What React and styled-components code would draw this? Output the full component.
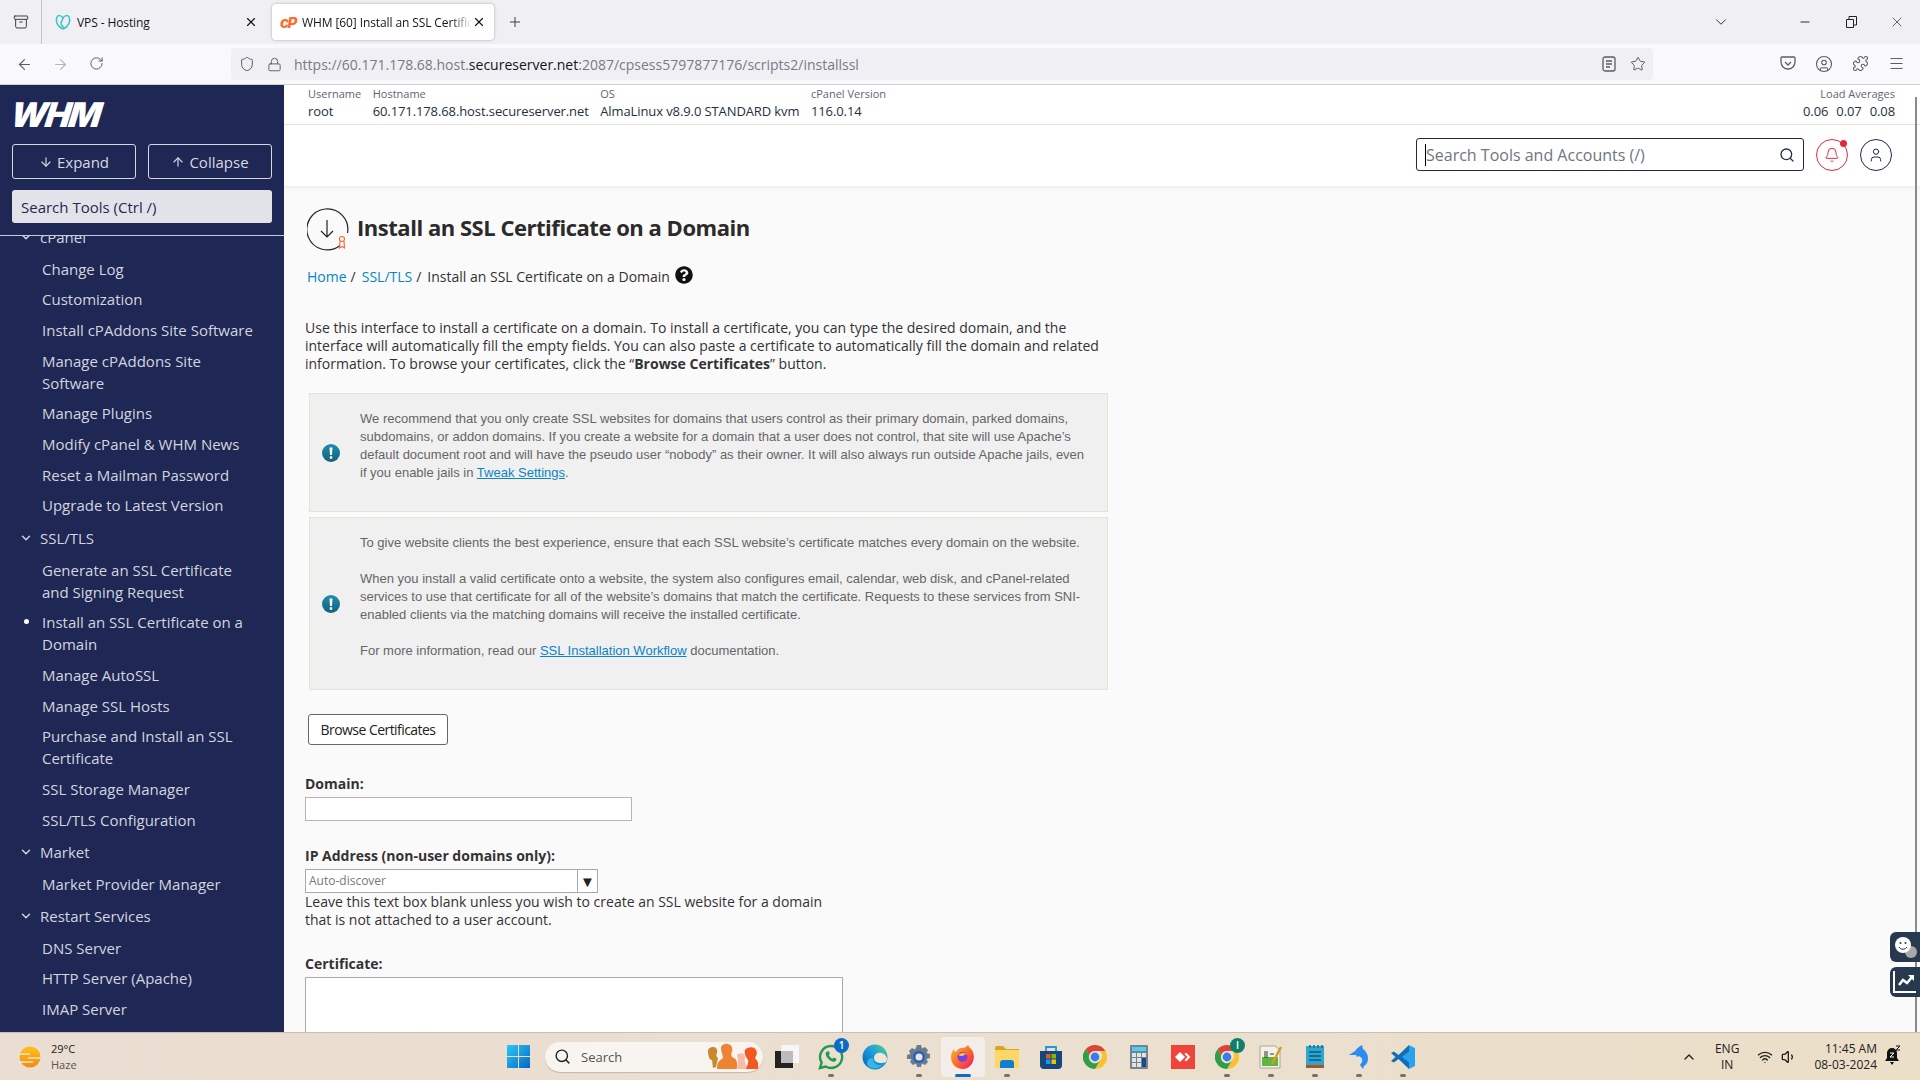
import React from "react";
import styled, { createGlobalStyle } from "styled-components";
import {
  Archive, X, Plus, ArrowLeft, ArrowRight, RotateCw, Shield, Lock, ChevronDown, Minus, Star,
  Menu, Puzzle, CircleUser, Search, Bell, User, ChevronUp, Wifi, Volume1, ArrowDown, ArrowUp,
} from "lucide-react";
import { FaQuestionCircle } from "react-icons/fa";

const GlobalStyle = createGlobalStyle`
  html, body { margin: 0; padding: 0; height: 100%; overflow: hidden; }
  body { font-family: "Open Sans", "Liberation Sans", sans-serif; color: #333; }
  * { box-sizing: border-box; }
`;

const Page = styled.div`
  width: 1920px;
  height: 1080px;
  display: flex;
  flex-direction: column;
  overflow: hidden;
`;

/* browser chrome */
const TabStrip = styled.div`
  height: 44px;
  background: #f0f0f4;
  display: flex;
  align-items: center;
  color: #3c3c44;
  flex: none;
`;
const StripButton = styled.div`
  width: 42px;
  height: 44px;
  display: flex;
  align-items: center;
  justify-content: center;
  border-right: 1px solid #c4c4c8;
  margin-right: 2px;
`;
const Tab = styled.div`
  width: ${(p) => p.$width}px;
  height: 36px;
  margin-right: ${(p) => p.$gap || 0}px;
  border-radius: 4px;
  display: flex;
  align-items: center;
  padding: 0 8px 0 ${(p) => p.$left}px;
  font-size: 12px;
  letter-spacing: -0.1px;
  background: ${(p) => (p.$active ? "#fff" : "transparent")};
  box-shadow: ${(p) => (p.$active ? "0 0 3px rgba(0,0,0,0.3)" : "none")};
  color: #15141a;
`;
const TabTitle = styled.span`
  flex: 1;
  margin-left: 6px;
  white-space: nowrap;
  overflow: hidden;
  mask-image: ${(p) => (p.$fade ? "linear-gradient(90deg, #000 88%, transparent)" : "none")};
`;
const CpMark = styled.span`
  color: #ff6c2c;
  font: italic 800 15px "Inter", sans-serif;
  letter-spacing: -1.5px;
  width: 16px;
`;
const StripSpacer = styled.div`
  flex: 1;
`;
const WindowButton = styled.div`
  width: 46px;
  display: flex;
  justify-content: center;
  align-items: center;
  color: #222;
  margin-right: ${(p) => p.$gap || 0}px;
`;
const ToolBar = styled.div`
  height: 41px;
  background: #f9f9fb;
  border-bottom: 1px solid #cfcfd8;
  display: flex;
  align-items: center;
  flex: none;
  color: #5b5b66;
`;
const NavButton = styled.div`
  width: 36px;
  display: flex;
  justify-content: center;
  color: ${(p) => (p.$off ? "#b4b4ba" : "#5b5b66")};
`;
const NavGroup = styled.div`
  display: flex;
  padding-left: 6px;
  width: 231px;
`;
const UrlBar = styled.div`
  width: 1422px;
  height: 32px;
  background: #f0f0f4;
  border-radius: 4px;
  display: flex;
  align-items: center;
  padding: 0 7px 0 8px;
  gap: 12px;
  color: #5b5b66;
`;
const UrlText = styled.div`
  flex: 1;
  font-size: 14px;
  color: #7a7a84;
  margin-left: 0;
  white-space: nowrap;
  letter-spacing: 0;
  strong {
    font-weight: 400;
    color: #15141a;
  }
`;
const ToolRight = styled.div`
  flex: 1;
  display: flex;
  justify-content: flex-end;
  padding-right: 15px;
  gap: 19px;
`;

/* body */
const Body = styled.div`
  flex: 1;
  min-height: 0;
  display: flex;
`;
const Sidebar = styled.aside`
  width: 284px;
  background: #1f2755;
  color: #d2d5df;
  display: flex;
  flex-direction: column;
  flex: none;
`;
const LogoRow = styled.div`
  height: 59px;
  padding: 9px 0 0 11px;
`;
const LogoText = styled.div`
  color: #fff;
  font: italic 900 34px/42px "Inter", "Liberation Sans", sans-serif;
  letter-spacing: -2px;
  transform: skewX(-8deg);
  transform-origin: left center;
  width: 90px;
`;
const SideButtons = styled.div`
  display: grid;
  grid-template-columns: 124px 124px;
  gap: 12px;
  padding: 0 12px;
`;
const SideButton = styled.div`
  height: 35px;
  border: 1px solid #d7d9e2;
  border-radius: 3px;
  display: flex;
  align-items: center;
  justify-content: center;
  gap: 4px;
  font-size: 15px;
  color: #d7d9e2;
`;
const SideSearch = styled.div`
  height: 33px;
  margin: 11px 12px 0;
  padding: 0 9px;
  background: #e1e3e8;
  border-radius: 3px;
  color: #1f2755;
  font-size: 15px;
  display: flex;
  align-items: center;
`;
const SideNav = styled.nav`
  flex: 1;
  min-height: 0;
  margin-top: 12px;
  border-top: 1px solid #c5c8d6;
  overflow: hidden;
`;
const NavList = styled.div`
  margin-top: -16px;
`;
const NavHeader = styled.div`
  height: 33.5px;
  display: flex;
  align-items: center;
  padding-left: 19px;
  gap: 7px;
  font-size: 15px;
`;
const NavItem = styled.div`
  position: relative;
  padding: 4.33px 28px 4.33px 42px;
  font-size: 15px;
  line-height: 22px;
  ${(p) =>
    p.$active &&
    `&::before {
      content: "";
      position: absolute;
      left: 24px;
      top: 12px;
      width: 5px;
      height: 5px;
      border-radius: 50%;
      background: #fff;
    }`}
`;

/* main */
const Main = styled.main`
  flex: 1;
  min-width: 0;
  display: flex;
  flex-direction: column;
  position: relative;
  background: #fafafa;
`;
const InfoBar = styled.div`
  height: 40px;
  background: #fff;
  border-bottom: 1px solid #e4e4e4;
  display: flex;
  padding: 1px 25px 0 24px;
  flex: none;
`;
const InfoCell = styled.div`
  margin-right: 11.5px;
  ${(p) => p.$right && "margin: 0 0 0 auto; text-align: right;"}
`;
const InfoLabel = styled.div`
  font-size: 11px;
  line-height: 16px;
  color: #5f6670;
`;
const InfoValue = styled.div`
  font-size: 13px;
  line-height: 19px;
  color: #243044;
  white-space: nowrap;
  display: flex;
  gap: 8px;
  letter-spacing: -0.1px;
`;
const TopBar = styled.div`
  height: 61px;
  background: #fff;
  box-shadow: 0 2px 4px rgba(0, 0, 0, 0.06);
  display: flex;
  align-items: center;
  justify-content: flex-end;
  padding: 0 28px 2px 0;
  gap: 12px;
  flex: none;
  z-index: 1;
`;
const SearchBox = styled.div`
  width: 388px;
  height: 33px;
  border: 1px solid #1f2755;
  border-radius: 3px;
  display: flex;
  align-items: center;
  padding: 0 8px;
  color: #243044;
`;
const Caret = styled.span`
  width: 1px;
  height: 22px;
  background: #000;
`;
const SearchInput = styled.input`
  flex: 1;
  min-width: 0;
  border: 0;
  outline: 0;
  background: none;
  padding: 0;
  font: 16px "Open Sans", sans-serif;
  &::placeholder {
    color: #6f7680;
    opacity: 1;
  }
`;
const RoundButton = styled.div`
  width: 32px;
  height: 32px;
  border-radius: 50%;
  border: 1px solid ${(p) => p.$color};
  color: ${(p) => p.$color};
  display: flex;
  align-items: center;
  justify-content: center;
  position: relative;
`;
const RedDot = styled.span`
  position: absolute;
  top: 0;
  right: 0;
  width: 7px;
  height: 7px;
  border-radius: 50%;
  background: #e6283c;
`;
const Content = styled.div`
  flex: 1;
  min-height: 0;
  overflow: hidden;
  padding: 21px 0 0 21px;
`;
const TitleRow = styled.div`
  display: flex;
  align-items: center;
  gap: 8px;
  margin-left: 2px;
`;
const Title = styled.h1`
  margin: 0;
  font-size: 22px;
  font-weight: 700;
  line-height: 38px;
  padding-bottom: 4px;
  color: #2b2b2b;
  letter-spacing: -0.47px;
`;
const Crumbs = styled.div`
  display: flex;
  align-items: center;
  margin: 14px 0 0 2px;
  height: 22px;
  font-size: 14px;
  color: #333;
`;
const CrumbLink = styled.a`
  color: #0a84c6;
  margin-right: 4px;
`;
const CrumbSep = styled.span`
  margin-right: 6px;
`;
const Intro = styled.p`
  margin: 32px 0 20px;
  width: 800px;
  font-size: 14px;
  line-height: 18px;
  color: #333;
`;
const Alert = styled.div`
  width: 799px;
  margin: 0 0 ${(p) => p.$gap || 0}px 4px;
  background: #f0f0f0;
  border: 1px solid #e8e4cf;
  display: flex;
  align-items: center;
  padding: 15.5px 15px 29.5px 0;
  font: 13px/18px "Liberation Sans", Arial, sans-serif;
  color: #666;
`;
const AlertIcon = styled.svg`
  width: 18px;
  height: 18px;
  margin: 14px 20px 0 12px;
  flex: none;
  align-self: center;
  position: relative;
`;
const AlertText = styled.div`
  flex: 1;
  p {
    margin: 0 0 18px;
  }
  p:last-child {
    margin: 0;
  }
  a {
    color: #0a84c6;
    text-decoration: underline;
  }
`;
const BrowseButton = styled.button`
  display: block;
  margin: 24px 0 0 3px;
  width: 140px;
  height: 31px;
  background: #fff;
  border: 1px solid #666;
  border-radius: 3px;
  font: 14px "Open Sans", sans-serif;
  letter-spacing: -0.55px;
  color: #222;
  padding: 0;
`;
const FieldLabel = styled.label`
  display: block;
  margin-top: ${(p) => p.$top}px;
  font-size: 14px;
  line-height: 20px;
  font-weight: 700;
  color: #333;
`;
const TextField = styled.input`
  display: block;
  width: 327px;
  height: 24px;
  margin-top: 3px;
  border: 1px solid #b4b4b4;
  background: #fff;
`;
const ComboBox = styled.div`
  width: 293px;
  height: 24px;
  margin-top: 3px;
  border: 1px solid #aaa;
  background: #fff;
  display: flex;
  font: 12px/22px "Open Sans", sans-serif;
  color: #777;
  padding-left: 3px;
`;
const ComboValue = styled.span`
  flex: 1;
`;
const ComboArrow = styled.span`
  width: 20px;
  border-left: 1px solid #aaa;
  color: #222;
  text-align: center;
  font-size: 15px;
`;
const HelpText = styled.div`
  width: 530px;
  font-size: 14px;
  line-height: 18px;
  color: #333;
`;
const CertArea = styled.textarea`
  display: block;
  width: 538px;
  height: 120px;
  margin-top: 3px;
  border: 1px solid #aaa;
  background: #fff;
`;
const ScrollThumb = styled.div`
  position: absolute;
  top: 12px;
  bottom: 0;
  right: 3px;
  width: 2px;
  background: #8a8a8a;
  z-index: 2;
`;
const SideTabs = styled.div`
  position: absolute;
  right: 0;
  top: 847px;
  display: flex;
  flex-direction: column;
  gap: 5px;
  z-index: 2;
`;
const SideTab = styled.div`
  width: 30px;
  height: 30px;
  background: #27394e;
  border-radius: 6px 0 0 6px;
  display: flex;
  align-items: center;
  justify-content: center;
`;

/* taskbar */
const TaskBar = styled.footer`
  height: 48px;
  flex: none;
  background: linear-gradient(90deg, #eaddd1, #ebdfd0 50%, #ebdfc8);
  border-top: 1px solid #c8c0b6;
  display: flex;
  align-items: center;
`;
const Weather = styled.div`
  width: 496px;
  flex: none;
  display: flex;
  align-items: center;
  padding-left: 19px;
  gap: 10px;
  font-size: 11px;
  line-height: 16px;
  color: #222;
`;
const WeatherSub = styled.div`
  color: #555;
`;
const TaskGroup = styled.div`
  display: flex;
  align-items: center;
`;
const StartIcon = styled.div`
  width: 44px;
  display: flex;
  justify-content: center;
`;
const TaskSearch = styled.div`
  width: 218px;
  height: 30px;
  margin: 0 2px 0 5px;
  background: #f8f4ef;
  border-radius: 15px;
  box-shadow: 0 1px 1px rgba(0, 0, 0, 0.18);
  display: flex;
  align-items: center;
  padding: 0 2px 0 9px;
  gap: 10px;
  font-size: 13px;
  color: #555;
`;
const TaskSearchLabel = styled.span`
  flex: 1;
`;
const TaskItem = styled.div`
  width: 44px;
  height: 40px;
  position: relative;
  display: flex;
  align-items: center;
  justify-content: center;
  border-radius: 4px;
  background: ${(p) => (p.$active ? "#f3eee8" : "transparent")};
  ${(p) =>
    (p.$dot || p.$active) &&
    `&::after {
      content: "";
      position: absolute;
      left: 50%;
      bottom: 0;
      transform: translateX(-50%);
      width: ${p.$active ? 16 : 6}px;
      height: 3px;
      border-radius: 2px;
      background: ${p.$active ? "#0a6cc4" : "#77716a"};
    }`}
`;
const TaskBadge = styled.span`
  position: absolute;
  top: 1px;
  right: 4px;
  width: 15px;
  height: 15px;
  border-radius: 50%;
  background: ${(p) => p.$bg};
  color: #fff;
  font-size: 10px;
  line-height: 15px;
  text-align: center;
  font-weight: 600;
`;
const Tray = styled.div`
  margin-left: auto;
  display: flex;
  align-items: center;
  font-size: 12px;
  line-height: 16px;
  color: #222;
`;
const TrayCaret = styled.div`
  width: 20px;
  display: flex;
  justify-content: center;
  margin-right: 16px;
`;
const TrayLang = styled.div`
  text-align: center;
  margin-right: 18px;
`;
const TrayIcons = styled.div`
  display: flex;
  gap: 8px;
  margin-right: 17px;
`;
const TrayClock = styled.div`
  text-align: right;
  margin-right: 7px;
`;
const TrayBell = styled.div`
  width: 36px;
`;

const Windows11 = () => (
  <svg width="23" height="23" viewBox="0 0 23 23">
    <defs>
      <linearGradient id="win" x1="0" y1="0" x2="1" y2="1">
        <stop offset="0" stopColor="#2bc8f7" />
        <stop offset="1" stopColor="#0667c6" />
      </linearGradient>
    </defs>
    <path fill="url(#win)" d="M0 0h11v11H0zM12 0h11v11H12zM0 12h11v11H0zM12 12h11v11H12z" />
  </svg>
);

const SearchPeople = () => (
  <svg width="54" height="28" viewBox="0 0 54 28">
    <path fill="#c78b2e" d="M1 8c0-3 3-4 5-4 3 0 5 2 4 6-1 2-1 3 1 5l-2 9-3 1-1-8c-3 0-4-5-4-9z" />
    <path fill="#ec8434" d="M14 5c0-3 4-5 7-4 4 1 5 4 4 8-1 2-1 3 0 5 3 1 5 3 5 6v6H10c0-5 1-8 6-11 0-3-2-6-2-10z" />
    <path fill="#f7bba8" d="M30 12c3-3 8-2 8 2 0 2-1 3 0 5l2 7H29c2-4 3-7 1-14z" />
    <path fill="#f4571f" d="M38 7c2-3 9-4 11 0 2 3 0 6-1 8 1 2 3 3 3 5v6H39c1-4 3-6 2-9-2-3-4-6-3-10z" />
  </svg>
);

const TaskView = () => (
  <svg width="24" height="24" viewBox="0 0 24 24">
    <rect x="6" y="0" width="18" height="18" fill="#f6f6f6" />
    <rect x="0" y="6" width="18" height="17" fill="#222" />
    <rect x="6" y="6" width="12" height="12" fill="#bcbcbc" />
  </svg>
);

const WhatsApp = () => (
  <svg width="26" height="26" viewBox="0 0 26 26">
    <path fill="none" stroke="#1f9a4e" strokeWidth="2.4" d="M13 2a11 11 0 0 0-9.4 16.6L2 24l5.6-1.5A11 11 0 1 0 13 2z" />
    <path fill="#1f9a4e" d="M9 7.5c-2 1.5-1.500 4 .8 6.800 2.500 3 5.500 4.300 7.500 3 1.300-.9 1.400-2.300.8-2.700l-2.400-1.200-1.200 1.300c-1.400-.5-3-2.200-3.700-3.800l1.100-1.200-1.200-2.400z" />
  </svg>
);

const Edge = () => (
  <svg width="26" height="26" viewBox="0 0 26 26">
    <defs>
      <linearGradient id="edge" x1="0" y1="1" x2="1" y2="0">
        <stop offset="0" stopColor="#0c59a4" />
        <stop offset="0.55" stopColor="#1b9de2" />
        <stop offset="1" stopColor="#54d47c" />
      </linearGradient>
    </defs>
    <circle cx="13" cy="13" r="12.500" fill="url(#edge)" />
    <path fill="#f0e6d8" d="M25 15c-1-5-5-7-9-6-4 1-5 5-3 8 2 2 7 3 11 1l1-3z" />
    <path fill="#33b7ea" d="M11 14c0 5 4 8 9 7-3 4-10 5-14 1-2-3-1-8 5-8z" />
  </svg>
);

const Gear = () => (
  <svg width="26" height="26" viewBox="0 0 26 26">
    <path fill="#6a7b8c" d="M11 1h4l1 3.500 3-1.500 3 3-1.500 3 3.500 1v4l-3.500 1 1.500 3-3 3-3-1.500-1 3.500h-4l-1-3.500-3 1.500-3-3 1.500-3L1 15v-4l3.500-1L3 7l3-3 3 1.500z" />
    <circle cx="13" cy="13" r="6" fill="#1f62c4" />
    <circle cx="13" cy="13" r="3.500" fill="#f0e6d8" />
  </svg>
);

const Firefox = () => (
  <svg width="24" height="24" viewBox="0 0 24 24">
    <defs>
      <linearGradient id="fx" x1="0" y1="0" x2="1" y2="1">
        <stop offset="0" stopColor="#ffbd2e" />
        <stop offset="0.6" stopColor="#ff5a2c" />
        <stop offset="1" stopColor="#e31587" />
      </linearGradient>
    </defs>
    <path fill="url(#fx)" d="M17 0c1 3 4 4 5 7 3 8-2 17-10 17C5 24 0 19 0 12 0 8 2 5 3 4c0 2 1 3 2 3 1-2 3-4 6-4 2 0 5-1 6-3z" />
    <circle cx="11.500" cy="12" r="5" fill="#7542e5" />
    <path fill="#ffbd2e" d="M7 10c2-2 7-3 9 0-2-1-3 0-4 1-2 0-3 0-5-1z" />
  </svg>
);

const Folder = () => (
  <svg width="24" height="22" viewBox="0 0 24 22">
    <path fill="#d9a520" d="M0 2a2 2 0 0 1 2-2h6l3 3h13v6H0z" />
    <path fill="#fcd667" d="M0 4h24v18H0z" />
    <path fill="#0f7fd0" d="M5 17a3 3 0 0 1 3-3h8a3 3 0 0 1 3 3v5H5z" />
  </svg>
);

const Store = () => (
  <svg width="24" height="24" viewBox="0 0 24 24">
    <path fill="none" stroke="#1b9ad8" strokeWidth="1.800" d="M7 6V2h10v4" />
    <path fill="#17467e" d="M1 6h22v14a4 4 0 0 1-4 4H5a4 4 0 0 1-4-4z" />
    <path fill="#f25022" d="M7 9h4.500v4.500H7z" />
    <path fill="#7fba00" d="M12.500 9H17v4.500h-4.500z" />
    <path fill="#00a4ef" d="M7 14.500h4.500V19H7z" />
    <path fill="#ffb900" d="M12.500 14.500H17V19h-4.500z" />
  </svg>
);

const Chrome = () => (
  <svg width="24" height="24" viewBox="0 0 24 24">
    <path fill="#db4437" d="M12 0a12 12 0 0 1 10.400 6H12a6 6 0 0 0-5.700 4L2.500 4.600A12 12 0 0 1 12 0z" />
    <path fill="#fbc02d" d="M22.400 6A12 12 0 0 1 12 24l5.200-9a6 6 0 0 0 0-9z" />
    <path fill="#2f9e44" d="M2.500 4.600 6.300 10a6 6 0 0 0 10.900 5L12 24A12 12 0 0 1 2.500 4.600z" />
    <circle cx="12" cy="12" r="5.500" fill="#f0e6d8" />
    <circle cx="12" cy="12" r="4.400" fill="#3a7de8" />
  </svg>
);

const Calculator = () => (
  <svg width="18" height="24" viewBox="0 0 18 24">
    <rect width="18" height="24" rx="1" fill="#76828e" />
    <rect x="2" y="2" width="14" height="4" fill="#4fd0f0" />
    <path fill="#dfe4e8" d="M2 8h4v4H2zM7 8h4v4H7zM12 8h4v4h-4zM2 13h4v4H2zM7 13h4v4H7zM2 18h4v4H2zM7 18h4v4H7z" />
    <rect x="12" y="13" width="4" height="9" fill="#1b4a86" />
  </svg>
);

const AnyDesk = () => (
  <svg width="24" height="24" viewBox="0 0 24 24">
    <rect width="24" height="24" fill="#ef443b" />
    <path fill="#fff" d="m9 7 5 5-5 5-5-5zM15 7.500l4.500 4.500-4.500 4.500-1.500-1.500 3-3-3-3z" />
  </svg>
);

const Notes = () => (
  <svg width="24" height="24" viewBox="0 0 24 24">
    <path fill="#f3f1e6" stroke="#a9a69a" d="M1 1h15l5 4v18H1z" />
    <path fill="#5fb63a" d="M3 12h16v9H3z" />
    <path stroke="#333" d="M6 6v7M8 6v7M11 9h4" />
    <path stroke="#d99a2a" strokeWidth="2.500" d="m22 2-9 17" />
  </svg>
);

const Notepad = () => (
  <svg width="18" height="24" viewBox="0 0 18 24">
    <rect y="1" width="18" height="19" fill="#2fa6cf" />
    <path stroke="#1a6c8e" strokeWidth="1.500" d="M4 0v3M8 0v3M12 0v3M16 0v3" />
    <path stroke="#0e5a7d" strokeWidth="1.500" d="M3 7h12M3 11h12M3 15h12" />
    <rect y="20" width="18" height="3" fill="#a5571f" />
  </svg>
);

const Dolphin = () => (
  <svg width="20" height="24" viewBox="0 0 20 24">
    <path fill="#2c8cf2" d="M0 10 6 6c2-3 5-5 7-6l1 4c3 2 5 6 5 9 0 5-2 7-4 8l-1 3-3-4 2-3c1-3-1-5-3-6l-2 1-1-2z" />
  </svg>
);

const VsCode = () => (
  <svg width="24" height="24" viewBox="0 0 24 24">
    <path fill="#0d6fb8" d="M18 0 7.500 10 3 6.500 0 8l4.500 4L0 16l3 1.500 4.500-3.500L18 24z" />
    <path fill="#2aa3ee" d="m18 0 6 3v18l-6 3zM18 6.500 11 12l7 5.500z" />
  </svg>
);

const SunIcon = () => (
  <svg width="22" height="24" viewBox="0 0 22 24">
    <defs>
      <linearGradient id="sun" x1="0" y1="0" x2="0" y2="1">
        <stop offset="0" stopColor="#ffc21a" />
        <stop offset="1" stopColor="#f28a12" />
      </linearGradient>
    </defs>
    <circle cx="11" cy="12" r="10.500" fill="url(#sun)" />
    <path stroke="#f3e3c8" strokeWidth="1.500" d="M0 9h11M9 13h13M0 17h14" />
  </svg>
);

const ZzzBell = () => (
  <svg width="18" height="20" viewBox="0 0 18 20">
    <path fill="#111" d="M8 3a5 5 0 0 0-5 5v5l-2 3h14l-2-3V8a5 5 0 0 0-5-5zM6 17h4l-2 3z" />
    <path stroke="#fff" d="M6 8h4l-4 4h4" fill="none" />
    <path stroke="#111" d="M12 1h4l-4 4h4" fill="none" />
  </svg>
);

const TitleIcon = () => (
  <svg width="42" height="44" viewBox="0 0 42 44">
    <path fill="none" stroke="#222" strokeWidth="1.200" d="M33 38.500A20.500 20.500 0 1 1 40.500 26" />
    <path fill="none" stroke="#222" strokeWidth="1.200" d="M20 13v17M14 24l6 6 6-6" />
    <circle cx="35" cy="32" r="2.500" fill="none" stroke="#f26b3a" strokeWidth="1.200" />
    <path fill="none" stroke="#f26b3a" strokeWidth="1.200" d="M33 34.500 32.500 41l2.500-1.500 2.500 1.500-.5-6.500" />
  </svg>
);

const InfoIcon = () => (
  <AlertIcon viewBox="0 0 18 18">
    <defs>
      <linearGradient id="info" x1="0" y1="0" x2="0" y2="1">
        <stop offset="0" stopColor="#1b8fae" />
        <stop offset="1" stopColor="#14607c" />
      </linearGradient>
    </defs>
    <circle cx="9" cy="9" r="9" fill="url(#info)" />
    <path fill="#fff" d="M7.500 3.500h3l-.5 7.500H8zM7.800 12.300h2.400v2.400H7.800z" />
  </AlertIcon>
);

const GoDaddyMark = () => (
  <svg width="16" height="16" viewBox="0 0 16 16" fill="none" stroke="#3fc1c9" strokeWidth="1.500">
    <path d="M8 15C3 13 0 8 2 3c1-2 4-2 6 1 2-3 5-3 6-1 2 5-1 10-6 12z" />
    <path d="M8 4 6 9c0 2 2 4 3 4" />
  </svg>
);

const FaceIcon = () => (
  <svg width="26" height="26" viewBox="0 0 26 26">
    <circle cx="19" cy="18" r="6" fill="#a9a9a9" />
    <circle cx="11" cy="11" r="8" fill="#fff" />
    <circle cx="8.500" cy="9" r="1" fill="#27394e" />
    <circle cx="13.500" cy="9" r="1" fill="#27394e" />
    <path d="M7 13c2 3 6 3 8 0" fill="none" stroke="#27394e" />
  </svg>
);

const ChartIcon = () => (
  <svg width="24" height="24" viewBox="0 0 24 24" fill="none" stroke="#fff" strokeWidth="2">
    <path d="M1 1v21h22" />
    <path d="m6 15 4-5 4 3 5-6" strokeWidth="2.500" />
    <path d="M15 5h6v6z" fill="#fff" stroke="none" />
  </svg>
);

const navEntries = [
  { head: "cPanel" },
  "Change Log",
  "Customization",
  "Install cPAddons Site Software",
  "Manage cPAddons Site Software",
  "Manage Plugins",
  "Modify cPanel & WHM News",
  "Reset a Mailman Password",
  "Upgrade to Latest Version",
  { head: "SSL/TLS" },
  "Generate an SSL Certificate and Signing Request",
  { label: "Install an SSL Certificate on a Domain", active: true },
  "Manage AutoSSL",
  "Manage SSL Hosts",
  "Purchase and Install an SSL Certificate",
  "SSL Storage Manager",
  "SSL/TLS Configuration",
  { head: "Market" },
  "Market Provider Manager",
  { head: "Restart Services" },
  "DNS Server",
  "HTTP Server (Apache)",
  "IMAP Server",
];

const taskApps = [
  { icon: <WhatsApp />, dot: true, badge: "1", bg: "#0a6cc4" },
  { icon: <Edge /> },
  { icon: <Gear />, dot: true },
  { icon: <Firefox />, active: true },
  { icon: <Folder />, dot: true },
  { icon: <Store /> },
  { icon: <Chrome /> },
  { icon: <Calculator /> },
  { icon: <AnyDesk /> },
  { icon: <Chrome />, dot: true, badge: "I", bg: "#0f7f6c" },
  { icon: <Notes />, dot: true },
  { icon: <Notepad />, dot: true },
  { icon: <Dolphin />, dot: true },
  { icon: <VsCode />, dot: true },
];

const App = () => {
  return (
    <Page>
      <GlobalStyle />
      <TabStrip>
        <StripButton>
          <Archive size={16} strokeWidth={1.5} />
        </StripButton>
        <Tab $width={222} $left={11} $gap={6}>
          <GoDaddyMark />
          <TabTitle>VPS - Hosting</TabTitle>
          <X size={14} />
        </Tab>
        <Tab $width={222} $left={8} $gap={8} $active>
          <CpMark>cP</CpMark>
          <TabTitle $fade>WHM [60] Install an SSL Certific</TabTitle>
          <X size={14} />
        </Tab>
        <Plus size={16} strokeWidth={1.5} style={{ marginLeft: 5 }} />
        <StripSpacer />
        <WindowButton $gap={38}>
          <ChevronDown size={18} strokeWidth={1.2} />
        </WindowButton>
        <WindowButton>
          <Minus size={14} strokeWidth={1.6} />
        </WindowButton>
        <WindowButton>
          <svg width="11" height="12" viewBox="0 0 11 12" fill="none" stroke="#222">
            <path d="M.5 3.500h7v8h-7zM3 3V.5h7.500V9H8" />
          </svg>
        </WindowButton>
        <WindowButton>
          <X size={16} strokeWidth={1} />
        </WindowButton>
      </TabStrip>
      <ToolBar>
        <NavGroup>
          <NavButton>
            <ArrowLeft size={17} strokeWidth={1.5} />
          </NavButton>
          <NavButton $off>
            <ArrowRight size={17} strokeWidth={1.5} />
          </NavButton>
          <NavButton>
            <RotateCw size={15} strokeWidth={1.6} />
          </NavButton>
        </NavGroup>
        <UrlBar>
          <Shield size={16} strokeWidth={1.5} />
          <Lock size={15} strokeWidth={1.5} />
          <UrlText>
            https://60.171.178.68.host.<strong>secureserver.net</strong>:2087/cpsess5797877176/scripts2/installssl
          </UrlText>
          <svg width="14" height="16" viewBox="0 0 14 16" fill="none" stroke="#5b5b66" strokeWidth="1.300">
            <rect x="1" y="1" width="12" height="14" rx="2" />
            <path d="M4 5h6M4 8h6M4 11h4" />
          </svg>
          <Star size={16} strokeWidth={1.5} style={{ marginLeft: 2 }} />
        </UrlBar>
        <ToolRight>
          <svg width="16" height="16" viewBox="0 0 16 16" fill="none" stroke="#5b5b66" strokeWidth="1.300">
            <path d="M2 2h12a1 1 0 0 1 1 1v4a7 7 0 0 1-14 0V3a1 1 0 0 1 1-1zM5 7l3 3 3-3" />
          </svg>
          <CircleUser size={18} strokeWidth={1.5} />
          <Puzzle size={17} strokeWidth={1.5} />
          <Menu size={17} strokeWidth={1.4} />
        </ToolRight>
      </ToolBar>
      <Body>
        <Sidebar>
          <LogoRow>
            <LogoText>WHM</LogoText>
          </LogoRow>
          <SideButtons>
            <SideButton>
              <ArrowDown size={14} />
              Expand
            </SideButton>
            <SideButton>
              <ArrowUp size={14} />
              Collapse
            </SideButton>
          </SideButtons>
          <SideSearch>Search Tools (Ctrl /)</SideSearch>
          <SideNav>
            <NavList>
              {navEntries.map((entry) => {
                if (entry.head) {
                  return (
                    <NavHeader key={entry.head}>
                      <ChevronDown size={14} strokeWidth={2.5} />
                      {entry.head}
                    </NavHeader>
                  );
                }
                const label = entry.label || entry;
                return (
                  <NavItem key={label} $active={entry.active}>
                    {label}
                  </NavItem>
                );
              })}
            </NavList>
          </SideNav>
        </Sidebar>
        <Main>
          <InfoBar>
            <InfoCell>
              <InfoLabel>Username</InfoLabel>
              <InfoValue>root</InfoValue>
            </InfoCell>
            <InfoCell>
              <InfoLabel>Hostname</InfoLabel>
              <InfoValue>60.171.178.68.host.secureserver.net</InfoValue>
            </InfoCell>
            <InfoCell>
              <InfoLabel>OS</InfoLabel>
              <InfoValue>AlmaLinux v8.9.0 STANDARD kvm</InfoValue>
            </InfoCell>
            <InfoCell>
              <InfoLabel>cPanel Version</InfoLabel>
              <InfoValue>116.0.14</InfoValue>
            </InfoCell>
            <InfoCell $right>
              <InfoLabel>Load Averages</InfoLabel>
              <InfoValue>
                <span>0.06</span>
                <span>0.07</span>
                <span>0.08</span>
              </InfoValue>
            </InfoCell>
          </InfoBar>
          <TopBar>
            <SearchBox>
              <Caret />
              <SearchInput placeholder="Search Tools and Accounts (/)" />
              <Search size={16} />
            </SearchBox>
            <RoundButton $color="#e6283c">
              <Bell size={16} strokeWidth={1.5} />
              <RedDot />
            </RoundButton>
            <RoundButton $color="#1f2755">
              <User size={16} strokeWidth={1.5} />
            </RoundButton>
          </TopBar>
          <Content>
            <TitleRow>
              <TitleIcon />
              <Title>Install an SSL Certificate on a Domain</Title>
            </TitleRow>
            <Crumbs>
              <CrumbLink>Home</CrumbLink>
              <CrumbSep>/</CrumbSep>
              <CrumbLink>SSL/TLS</CrumbLink>
              <CrumbSep>/</CrumbSep>
              <span>Install an SSL Certificate on a Domain</span>
              <FaQuestionCircle size={18} color="#111" style={{ marginLeft: 5, marginBottom: 3 }} />
            </Crumbs>
            <Intro>
              Use this interface to install a certificate on a domain. To install a certificate, you can type the
              desired domain, and the interface will automatically fill the empty fields. You can also paste a
              certificate to automatically fill the domain and related information. To browse your certificates,
              click the “<b>Browse Certificates</b>” button.
            </Intro>
            <Alert $gap={5}>
              <InfoIcon />
              <AlertText>
                <p>
                  We recommend that you only create SSL websites for domains that users control as their primary
                  domain, parked domains, subdomains, or addon domains. If you create a website for a domain that a
                  user does not control, that site will use Apache’s default document root and will have the pseudo
                  user “nobody” as their owner. It will also always run outside Apache jails, even if you enable
                  jails in <a>Tweak Settings</a>.
                </p>
              </AlertText>
            </Alert>
            <Alert>
              <InfoIcon />
              <AlertText>
                <p>To give website clients the best experience, ensure that each SSL website’s certificate matches every domain on the website.</p>
                <p>
                  When you install a valid certificate onto a website, the system also configures email, calendar,
                  web disk, and cPanel-related services to use that certificate for all of the website’s domains that
                  match the certificate. Requests to these services from SNI-enabled clients via the matching domains
                  will receive the installed certificate.
                </p>
                <p>
                  For more information, read our <a>SSL Installation Workflow</a> documentation.
                </p>
              </AlertText>
            </Alert>
            <BrowseButton>Browse Certificates</BrowseButton>
            <FieldLabel $top={29}>Domain:</FieldLabel>
            <TextField />
            <FieldLabel $top={25}>IP Address (non-user domains only):</FieldLabel>
            <ComboBox>
              <ComboValue>Auto-discover</ComboValue>
              <ComboArrow>▼</ComboArrow>
            </ComboBox>
            <HelpText>
              Leave this text box blank unless you wish to create an SSL website for a domain that is not attached
              to a user account.
            </HelpText>
            <FieldLabel $top={25}>Certificate:</FieldLabel>
            <CertArea />
          </Content>
          <ScrollThumb />
          <SideTabs>
            <SideTab>
              <FaceIcon />
            </SideTab>
            <SideTab>
              <ChartIcon />
            </SideTab>
          </SideTabs>
        </Main>
      </Body>
      <TaskBar>
        <Weather>
          <SunIcon />
          <div>
            <div>29°C</div>
            <WeatherSub>Haze</WeatherSub>
          </div>
        </Weather>
        <TaskGroup>
          <StartIcon>
            <Windows11 />
          </StartIcon>
          <TaskSearch>
            <Search size={17} color="#222" />
            <TaskSearchLabel>Search</TaskSearchLabel>
            <SearchPeople />
          </TaskSearch>
          <TaskItem>
            <TaskView />
          </TaskItem>
          {taskApps.map((app, i) => (
            <TaskItem key={i} $dot={app.dot} $active={app.active}>
              {app.icon}
              {app.badge && <TaskBadge $bg={app.bg}>{app.badge}</TaskBadge>}
            </TaskItem>
          ))}
        </TaskGroup>
        <Tray>
          <TrayCaret>
            <ChevronUp size={16} />
          </TrayCaret>
          <TrayLang>
            <div>ENG</div>
            <div>IN</div>
          </TrayLang>
          <TrayIcons>
            <Wifi size={16} />
            <Volume1 size={16} />
          </TrayIcons>
          <TrayClock>
            <div>11:45 AM</div>
            <div>08-03-2024</div>
          </TrayClock>
          <TrayBell>
            <ZzzBell />
          </TrayBell>
        </Tray>
      </TaskBar>
    </Page>
  );
};

export default App;
